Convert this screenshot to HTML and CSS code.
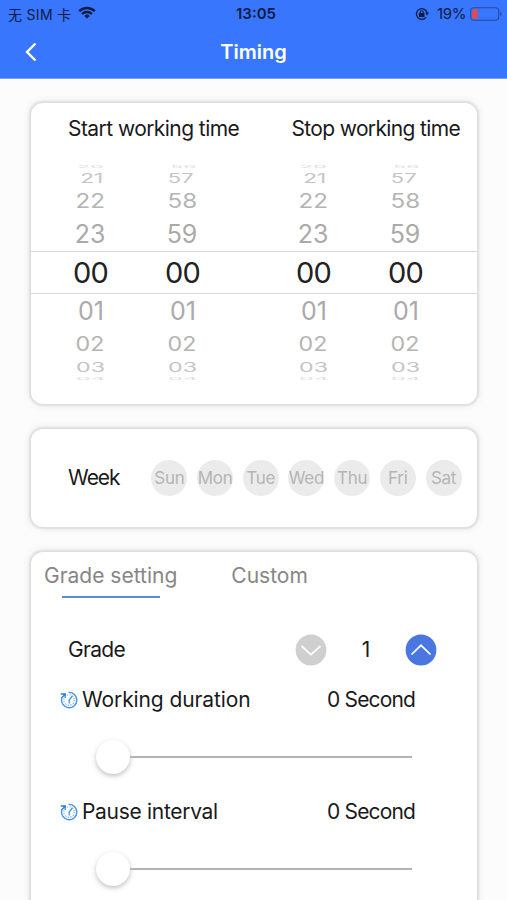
FILE: index.html
```html
<!DOCTYPE html>
<html lang="en">
<head>
    <meta charset="UTF-8">
    <meta name="viewport" content="width=device-width, initial-scale=1.0">
    <title>Timing</title>
    <link rel="stylesheet" href="styles.css">
</head>
<body>
    <header class="header">
        <div class="status-bar">
            <div class="carrier">
                <span>无 SIM 卡</span>
                <svg class="wifi" width="18" height="13" viewBox="0 0 18 13">
                    <path d="M1.2 5.2a11.2 11.2 0 0 1 15.6 0M4 8a7.2 7.2 0 0 1 10 0" fill="none" stroke="currentColor" stroke-width="2.4"/>
                    <path d="M9 12.6 6.3 9.9a3.9 3.9 0 0 1 5.4 0z" fill="currentColor"/>
                </svg>
            </div>
            <div class="clock">13:05</div>
            <div class="battery">
                <svg class="lock" width="14" height="14" viewBox="0 0 14 14">
                    <path d="M12 5.6A5.400 5.400 0 1 0 11 10.400" fill="none" stroke="currentColor" stroke-width="1.3"/>
                    <path d="M10.1 5.600h3.900l-1.900 3z" fill="currentColor"/>
                    <rect x="3.900" y="6" width="5.600" height="4" rx=".6" fill="currentColor"/>
                    <path d="M5.200 6.500V5.200a1.500 1.500 0 0 1 3 0v1.300" fill="none" stroke="currentColor" stroke-width="1.100"/>
                </svg>
                <span class="percent">19%</span>
                <svg width="32" height="14" viewBox="0 0 32 14">
                    <rect x=".7" y=".7" width="28" height="12.6" rx="3.2" fill="none" stroke="#274a9c" stroke-width="1.1"/>
                    <path d="M3.8 2.2H7.6v9.6H3.8a1.7 1.7 0 0 1-1.7-1.7V3.9a1.7 1.7 0 0 1 1.7-1.7z" fill="#e5484d"/>
                    <path d="M30.3 4.8c1.7.5 1.7 3.9 0 4.4z" fill="#274a9c"/>
                </svg>
            </div>
        </div>
        <div class="nav-bar">
            <svg class="back" width="14" height="20" viewBox="0 0 14 20">
                <path d="M11.5 1.500 3 10l8.500 8.500" fill="none" stroke="#fff" stroke-width="2.4"/>
            </svg>
            <h1>Timing</h1>
        </div>
    </header>

    <main class="content">
        <section class="card time-card">
            <div class="time-titles">
                <h2 class="start-title">Start working time</h2>
                <h2 class="stop-title">Stop working time</h2>
            </div>
            <div class="wheel">
                <div class="wheel-row edge-top"><span>20</span><span>56</span><span>20</span><span>56</span></div>
                <div class="wheel-row far-top"><span>21</span><span>57</span><span>21</span><span>57</span></div>
                <div class="wheel-row mid-top"><span>22</span><span>58</span><span>22</span><span>58</span></div>
                <div class="wheel-row near-top"><span>23</span><span>59</span><span>23</span><span>59</span></div>
                <div class="wheel-row selected"><span>00</span><span>00</span><span>00</span><span>00</span></div>
                <div class="wheel-row near-bottom"><span>01</span><span>01</span><span>01</span><span>01</span></div>
                <div class="wheel-row mid-bottom"><span>02</span><span>02</span><span>02</span><span>02</span></div>
                <div class="wheel-row far-bottom"><span>03</span><span>03</span><span>03</span><span>03</span></div>
                <div class="wheel-row edge-bottom"><span>04</span><span>04</span><span>04</span><span>04</span></div>
            </div>
        </section>

        <section class="card week-card">
            <h2 class="week-title">Week</h2>
            <div class="days">
                <span>Sun</span>
                <span>Mon</span>
                <span>Tue</span>
                <span>Wed</span>
                <span>Thu</span>
                <span>Fri</span>
                <span>Sat</span>
            </div>
        </section>

        <section class="card grade-card">
            <div class="tabs">
                <div class="tab active">Grade setting</div>
                <div class="tab">Custom</div>
            </div>

            <div class="grade-row">
                <span class="grade-label">Grade</span>
                <div class="stepper">
                    <svg width="32" height="32" viewBox="0 0 32 32">
                        <circle cx="16" cy="16" r="15.4" fill="#cfcfcf"/>
                        <path d="M6.500 12 16 20.700 25.500 12" fill="none" stroke="#fff" stroke-width="1.700"/>
                    </svg>
                    <span>1</span>
                    <svg width="32" height="32" viewBox="0 0 32 32">
                        <circle cx="16" cy="16" r="15.4" fill="#4a76e0"/>
                        <path d="M6.500 20.500 16 11.300 25.500 20.500" fill="none" stroke="#fff" stroke-width="1.700"/>
                    </svg>
                </div>
            </div>

            <div class="setting">
                <div class="setting-head">
                    <svg class="timer" width="18" height="18" viewBox="0 0 18 18">
                        <path d="M8.500 1.400A7.700 7.700 0 1 1 1.700 7" fill="none" stroke="#4a95dc" stroke-width="1.400"/>
                        <path d="M.8 3H5.300V7M5.300 3 1.500 7" fill="none" stroke="#2f7fd0" stroke-width="1.400"/>
                        <circle cx="9" cy="9" r="5.300" fill="none" stroke="#7db3e6" stroke-width="1.300" stroke-dasharray="1.200 1.576"/>
                        <path d="M12.300 5 9.200 9v3.500" fill="none" stroke="#4a95dc" stroke-width="1.300"/>
                    </svg>
                    <span class="name working">Working duration</span>
                    <span class="value">0 Second</span>
                </div>
                <div class="slider"><div class="thumb"></div><div class="track"></div></div>
            </div>

            <div class="setting">
                <div class="setting-head">
                    <svg class="timer" width="18" height="18" viewBox="0 0 18 18">
                        <path d="M8.500 1.400A7.700 7.700 0 1 1 1.700 7" fill="none" stroke="#4a95dc" stroke-width="1.400"/>
                        <path d="M.8 3H5.300V7M5.300 3 1.500 7" fill="none" stroke="#2f7fd0" stroke-width="1.400"/>
                        <circle cx="9" cy="9" r="5.300" fill="none" stroke="#7db3e6" stroke-width="1.300" stroke-dasharray="1.200 1.576"/>
                        <path d="M12.300 5 9.200 9v3.500" fill="none" stroke="#4a95dc" stroke-width="1.300"/>
                    </svg>
                    <span class="name pause">Pause interval</span>
                    <span class="value">0 Second</span>
                </div>
                <div class="slider"><div class="thumb"></div><div class="track"></div></div>
            </div>
        </section>
    </main>
</body>
</html>
```

FILE: styles.css
```css
* {
    box-sizing: border-box;
}
body {
    font-family: Inter, "Noto Sans CJK SC", sans-serif;
    margin: 0;
    background-color: #fcfcfc;
    color: #1a1a1a;
}
h1, h2 {
    margin: 0;
    font-weight: 400;
}
h2 {
    font-size: 21px;
    line-height: 26px;
    letter-spacing: -0.56px;
    white-space: nowrap;
}

/* header */
.header {
    height: 79px;
    background-color: #3876fd;
    border-bottom: 1px solid #72a2fd;
}
.status-bar {
    display: grid;
    grid-template-columns: 1fr 60px 1fr;
    align-items: center;
    height: 27px;
    padding: 0 5px 0 8px;
    font-size: 14px;
    color: #0d1b45;
}
.carrier, .battery {
    display: flex;
    align-items: center;
    white-space: nowrap;
}
.carrier {
    gap: 7px;
    letter-spacing: 0.3px;
}
.wifi {
    margin-top: -2px;
}
.clock {
    padding-left: 2px;
    text-align: center;
    font-weight: 600;
    font-size: 15px;
}
.battery {
    justify-content: flex-end;
}
.percent {
    margin: 0 4px 0 8px;
    font-size: 15px;
    letter-spacing: -0.4px;
}
.nav-bar {
    display: grid;
    grid-template-columns: 60px 1fr 60px;
    align-items: center;
    height: 50px;
}
.back {
    margin-left: 24px;
}
h1 {
    text-align: center;
    font-size: 20px;
    font-weight: 600;
    color: #fff;
}

/* cards */
.content {
    display: flex;
    flex-direction: column;
    gap: 25px;
    height: 821px;
    padding: 24px 30px 0 31px;
    overflow: hidden;
}
.card {
    background-color: #fff;
    border-radius: 12px;
    box-shadow: 0 0 2px 2px #dedede, 0 0 7px 3px #f0f0f0;
}
.time-card {
    height: 301px;
    padding-top: 13px;
}
.time-titles {
    display: flex;
    justify-content: space-between;
    padding: 0 17px 0 37px;
}
.stop-title {
    letter-spacing: -0.65px;
}

/* time wheel, rows get flatter towards the edges */
.wheel {
    margin-top: 22px;
    color: #aaa;
}
.wheel-row {
    display: grid;
    grid-template-columns: 92px 92px 39px 92px 92px;
    padding-left: 14px;
    align-items: center;
    justify-items: center;
    overflow: hidden;
    font-size: 25px;
    line-height: 30px;
}
.wheel-row span {
    margin: -15px 0;
}
.wheel-row span:nth-child(3) {
    grid-column: 4;
}
.edge-top {
    height: 6px;
    color: #ddd;
}
.edge-top span {
    transform: scale(0.85, 0.15);
}
.far-top {
    height: 15px;
    color: #c4c4c4;
}
.far-top span {
    transform: translateX(1px) scale(0.9, 0.5);
}
.far-top span:nth-child(even) {
    transform: translateX(-2px) scale(0.88, 0.5);
}
.mid-top {
    height: 32px;
    color: #b4b4b4;
}
.mid-top span {
    transform: translateX(-1px) scale(0.97, 0.78);
}
.near-top {
    height: 34px;
}
.near-top span {
    transform: translateX(-1px);
}
.selected {
    height: 43px;
    border-top: 1px solid #dcdcdc;
    border-bottom: 1px solid #dcdcdc;
    font-size: 29px;
    letter-spacing: -0.8px;
    color: #222;
}
.selected span {
    transform: translateX(-0.5px);
}
.near-bottom {
    height: 34px;
}
.mid-bottom {
    height: 31px;
    color: #b4b4b4;
}
.mid-bottom span {
    transform: translateX(-0.5px) scale(0.93, 0.78);
}
.far-bottom {
    height: 16px;
    color: #c4c4c4;
}
.far-bottom span {
    transform: scale(0.93, 0.5);
}
.edge-bottom {
    height: 8px;
    color: #ddd;
}
.edge-bottom span {
    transform: scale(0.93, 0.15);
}

/* week */
.week-card {
    display: flex;
    align-items: center;
    justify-content: space-between;
    height: 98px;
    padding: 0 15.5px 0 37px;
}
.week-title {
    letter-spacing: -1px;
}
.days {
    display: flex;
    gap: 9.7px;
}
.days span {
    display: flex;
    align-items: center;
    justify-content: center;
    width: 36px;
    height: 36px;
    border-radius: 50%;
    background-color: #ebebeb;
    color: #b5b5b5;
    font-size: 17px;
    letter-spacing: -0.3px;
}

/* grade */
.grade-card {
    flex: 1;
    padding-top: 9px;
    border-radius: 12px 12px 0 0;
    font-size: 21px;
    line-height: 30px;
    white-space: nowrap;
}
.tabs {
    display: flex;
    gap: 54px;
    padding-left: 13px;
    color: #868686;
}
.tab.active::after {
    content: "";
    display: block;
    width: 98px;
    height: 2px;
    margin: 5px auto 0;
    background-color: #5b8bdc;
}
.grade-row {
    display: flex;
    align-items: center;
    justify-content: space-between;
    height: 32px;
    margin-top: 36px;
    padding: 0 40px 0 37px;
}
.grade-label {
    letter-spacing: -0.7px;
}
.stepper {
    display: flex;
    align-items: center;
    justify-content: space-between;
    width: 142px;
}
.setting {
    height: 112px;
    padding-top: 19px;
}
.setting-head {
    display: flex;
    align-items: center;
    padding: 0 62px 0 29px;
}
.name {
    margin-left: 4px;
}
.working {
    letter-spacing: -0.1px;
}
.pause {
    letter-spacing: -0.3px;
}
.value {
    margin-left: auto;
    letter-spacing: -0.85px;
}
.slider {
    display: flex;
    align-items: center;
    margin: 25px 65px 0 65px;
}
.thumb {
    width: 34px;
    height: 34px;
    border-radius: 50%;
    background-color: #fff;
    box-shadow: 0 2px 5px rgba(0,0,0,0.25);
}
.track {
    flex: 1;
    height: 2px;
    background-color: #b3b3b3;
}
```
